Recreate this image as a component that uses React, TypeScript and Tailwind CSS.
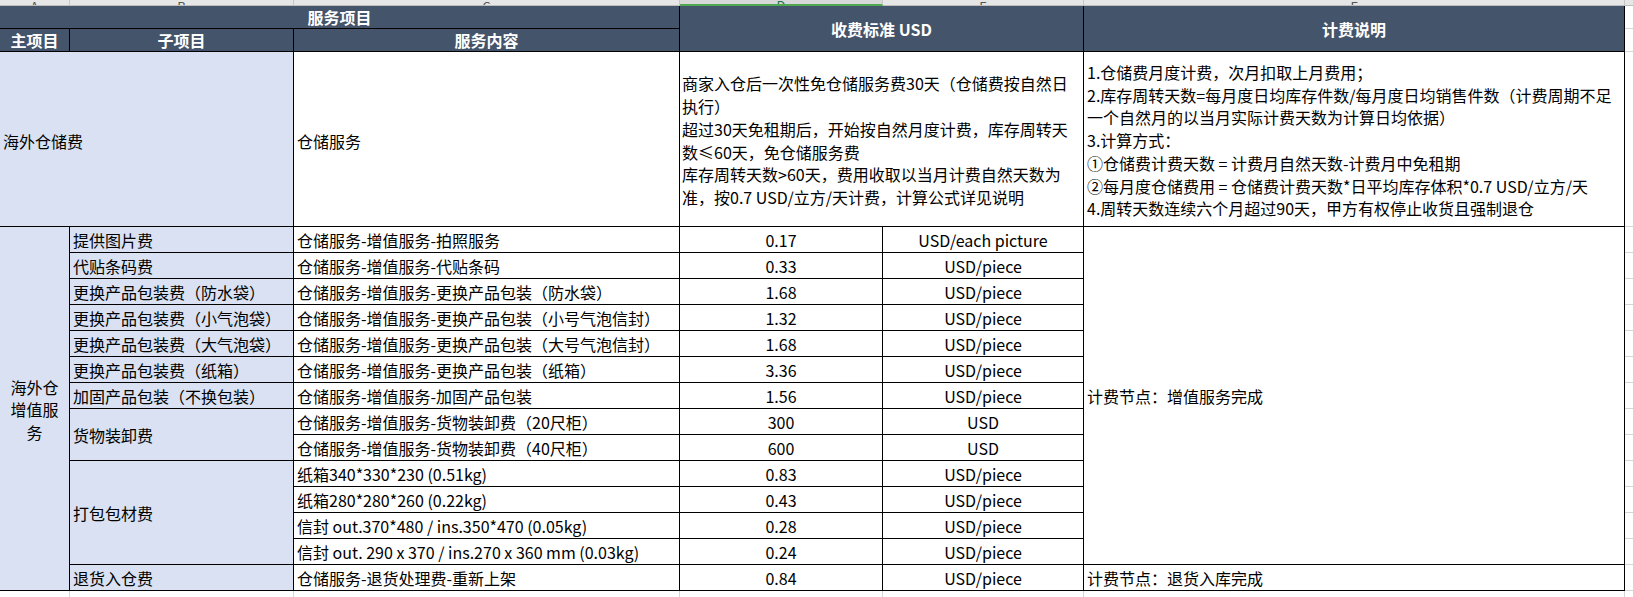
import React from 'react';

type Row = {
  row: string;
  content: string;
  price: string;
  unit: string;
};

// 14 value-added rows, row-start values written out so Tailwind sees them
const rows: Row[] = [
  { row: 'row-start-4', content: '仓储服务-增值服务-拍照服务', price: '0.17', unit: 'USD/each picture' },
  { row: 'row-start-5', content: '仓储服务-增值服务-代贴条码', price: '0.33', unit: 'USD/piece' },
  { row: 'row-start-6', content: '仓储服务-增值服务-更换产品包装（防水袋）', price: '1.68', unit: 'USD/piece' },
  { row: 'row-start-7', content: '仓储服务-增值服务-更换产品包装（小号气泡信封）', price: '1.32', unit: 'USD/piece' },
  { row: 'row-start-8', content: '仓储服务-增值服务-更换产品包装（大号气泡信封）', price: '1.68', unit: 'USD/piece' },
  { row: 'row-start-9', content: '仓储服务-增值服务-更换产品包装（纸箱）', price: '3.36', unit: 'USD/piece' },
  { row: 'row-start-10', content: '仓储服务-增值服务-加固产品包装', price: '1.56', unit: 'USD/piece' },
  { row: 'row-start-11', content: '仓储服务-增值服务-货物装卸费（20尺柜）', price: '300', unit: 'USD' },
  { row: 'row-start-12', content: '仓储服务-增值服务-货物装卸费（40尺柜）', price: '600', unit: 'USD' },
  { row: 'row-start-13', content: '纸箱340*330*230 (0.51kg)', price: '0.83', unit: 'USD/piece' },
  { row: 'row-start-14', content: '纸箱280*280*260 (0.22kg)', price: '0.43', unit: 'USD/piece' },
  { row: 'row-start-15', content: '信封 out.370*480 / ins.350*470 (0.05kg)', price: '0.28', unit: 'USD/piece' },
  { row: 'row-start-16', content: '信封 out. 290 x 370 / ins.270 x 360 mm (0.03kg)', price: '0.24', unit: 'USD/piece' },
  { row: 'row-start-17', content: '仓储服务-退货处理费-重新上架', price: '0.84', unit: 'USD/piece' },
];

const subItems = [
  { row: 'row-start-4', text: '提供图片费' },
  { row: 'row-start-5', text: '代贴条码费' },
  { row: 'row-start-6', text: '更换产品包装费（防水袋）' },
  { row: 'row-start-7', text: '更换产品包装费（小气泡袋）' },
  { row: 'row-start-8', text: '更换产品包装费（大气泡袋）' },
  { row: 'row-start-9', text: '更换产品包装费（纸箱）' },
  { row: 'row-start-10', text: '加固产品包装（不换包装）' },
  { row: 'row-start-11 row-span-2', text: '货物装卸费' },
  { row: 'row-start-13 row-span-4', text: '打包包材费' },
  { row: 'row-start-17', text: '退货入仓费' },
];

const storagePrice = [
  '商家入仓后一次性免仓储服务费30天（仓储费按自然日',
  '执行）',
  '超过30天免租期后，开始按自然月度计费，库存周转天',
  '数≤60天，免仓储服务费',
  '库存周转天数>60天，费用收取以当月计费自然天数为',
  '准，按0.7 USD/立方/天计费，计算公式详见说明',
];

const storageNotes = [
  '1.仓储费月度计费，次月扣取上月费用；',
  '2.库存周转天数=每月度日均库存件数/每月度日均销售件数（计费周期不足',
  '一个自然月的以当月实际计费天数为计算日均依据）',
  '3.计算方式：',
  '①仓储费计费天数 = 计费月自然天数-计费月中免租期',
  '②每月度仓储费用 = 仓储费计费天数*日平均库存体积*0.7 USD/立方/天',
  '4.周转天数连续六个月超过90天，甲方有权停止收货且强制退仓',
];

const head = 'flex items-center justify-center bg-[#44546A] text-white font-bold text-[16px] leading-[22px]';
const cell = 'flex items-center bg-white text-black text-[16px] leading-[22px] px-[3px] whitespace-nowrap overflow-hidden';
const lav = 'flex items-center bg-[#D9E1F2] text-black text-[16px] leading-[22px] px-[3px] whitespace-nowrap overflow-hidden';

function ColumnLetters() {
  const cols = [
    { w: 'w-[70px]', l: 'A' },
    { w: 'w-[224px]', l: 'B' },
    { w: 'w-[386px]', l: 'C' },
    { w: 'w-[203px]', l: 'D', sel: true },
    { w: 'w-[201px]', l: 'E' },
    { w: 'w-[541px]', l: 'F' },
  ];
  return (
    <div className="flex h-[6px] bg-[#E6E6E6]">
      {cols.map((c) => (
        <div
          key={c.l}
          className={`${c.w} shrink-0 flex items-end justify-center overflow-hidden border-r border-[#C6C6C6] ${
            c.sel ? 'border-b-2 border-b-[#4FA84F] bg-[#D8D8D8]' : 'border-b border-b-[#BDBDBD]'
          }`}
        >
          <span className={`text-[13px] leading-[13px] translate-y-[8px] ${c.sel ? 'text-[#217346]' : 'text-[#555]'}`}>
            {c.l}
          </span>
        </div>
      ))}
      <div className="flex-1 border-b border-[#BDBDBD]" />
    </div>
  );
}

export default function App() {
  return (
    <div className="w-[1633px] h-[597px] overflow-hidden bg-white font-['Noto_Sans_CJK_SC',sans-serif]">
      <ColumnLetters />

      <div className="flex">
        <div className="w-[1625px] shrink-0 grid grid-cols-[69px_223px_385px_202px_200px_540px] grid-rows-[22px_22px_174px_repeat(14,25px)] gap-px bg-black pr-px pb-px">
          {/* header */}
          <div className={`${head} col-start-1 col-span-3 row-start-1`}>服务项目</div>
          <div className={`${head} col-start-4 col-span-2 row-start-1 row-span-2`}>收费标准 USD</div>
          <div className={`${head} col-start-6 row-start-1 row-span-2`}>计费说明</div>
          <div className={`${head} col-start-1 row-start-2`}>主项目</div>
          <div className={`${head} col-start-2 row-start-2`}>子项目</div>
          <div className={`${head} col-start-3 row-start-2`}>服务内容</div>

          {/* storage */}
          <div className={`${lav} col-start-1 col-span-2 row-start-3 pt-[3px]`}>海外仓储费</div>
          <div className={`${cell} col-start-3 row-start-3 pt-[3px]`}>仓储服务</div>
          <div className={`${cell} col-start-4 col-span-2 row-start-3 pl-[2px] pt-[3px]`}>
            <div className="leading-[22.8px]">
              {storagePrice.map((l) => (
                <div key={l}>{l}</div>
              ))}
            </div>
          </div>
          <div className={`${cell} col-start-6 row-start-3 pt-[3px]`}>
            <div className="leading-[22.7px]">
              {storageNotes.map((l) => (
                <div key={l}>{l}</div>
              ))}
            </div>
          </div>

          {/* value added */}
          <div className={`${lav} col-start-1 row-start-4 row-span-14 justify-center text-center pt-[2px]`}>
            <div className="leading-[22.5px]">
              海外仓
              <br />
              增值服
              <br />务
            </div>
          </div>
          {subItems.map((s) => (
            <div key={s.text} className={`${lav} col-start-2 ${s.row}`}>
              {s.text}
            </div>
          ))}
          {rows.map((r) => (
            <React.Fragment key={r.row}>
              <div className={`${cell} col-start-3 ${r.row}`}>{r.content}</div>
              <div className={`${cell} col-start-4 ${r.row} justify-center`}>{r.price}</div>
              <div className={`${cell} col-start-5 ${r.row} justify-center`}>{r.unit}</div>
            </React.Fragment>
          ))}
          <div className={`${cell} col-start-6 row-start-4 row-span-13`}>计费节点：增值服务完成</div>
          <div className={`${cell} col-start-6 row-start-17`}>计费节点：退货入库完成</div>
        </div>

        {/* sheet grid beyond the table */}
        <div className="flex-1 flex flex-col">
          <div className="h-[23px] border-b border-[#D4D4D4]" />
          <div className="h-[23px] border-b border-[#D4D4D4]" />
          <div className="h-[175px] border-b border-[#D4D4D4]" />
          {rows.map((r) => (
            <div key={r.row} className="h-[26px] border-b border-[#D4D4D4]" />
          ))}
        </div>
      </div>

      <div className="flex h-[6px]">
        <div className="w-[70px] shrink-0 border-r border-[#D4D4D4]" />
        <div className="w-[224px] shrink-0 border-r border-[#D4D4D4]" />
        <div className="w-[386px] shrink-0 border-r border-[#D4D4D4]" />
        <div className="w-[203px] shrink-0 border-r border-[#D4D4D4]" />
        <div className="w-[201px] shrink-0 border-r border-[#D4D4D4]" />
        <div className="w-[541px] shrink-0 border-r border-[#D4D4D4]" />
      </div>
    </div>
  );
}
